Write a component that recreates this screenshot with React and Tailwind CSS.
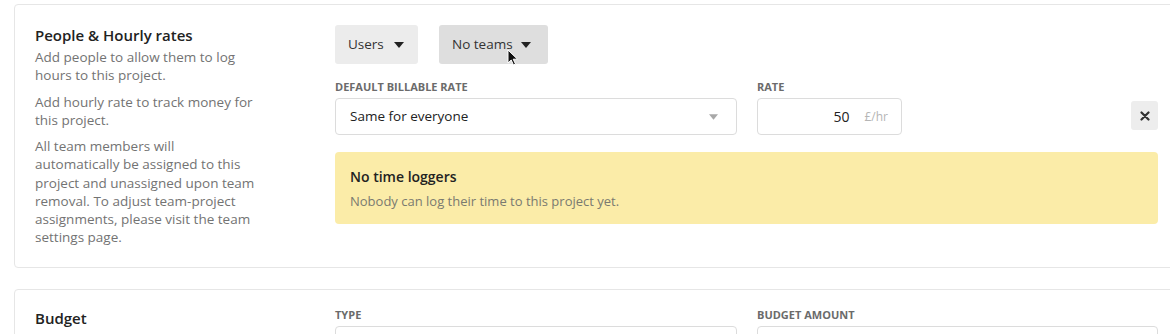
import React from 'react';

const Caret = ({ className = '' }) => (
  <svg className={className} width="10" height="6" viewBox="0 0 10 6">
    <path d="M0 0h10L5 6z" fill="currentColor" />
  </svg>
);

const Label = ({ children }) => (
  <div className="text-[11px] font-bold uppercase text-[#6b6b6b] leading-[14px] mb-[4px]">
    {children}
  </div>
);

const App = () => {
  return (
    <div className="w-[1170px] h-[334px] overflow-hidden bg-white text-[#222] font-['Open_Sans','Liberation_Sans',sans-serif]">
      <div className="pt-[4px] pl-[14px]">
        {/* People & Hourly rates */}
        <div className="w-[1165px] border border-[#e6e6e6] rounded-[4px] p-[20px] flex">
          <div className="w-[300px] shrink-0">
            <h2 className="text-[15px] font-semibold leading-[20px] text-[#222]">People &amp; Hourly rates</h2>
            <div className="w-[222px] text-[13.5px] leading-[18.25px] text-[#737373] mt-[3px] space-y-[8px]">
              <p>Add people to allow them to log hours to this project.</p>
              <p>Add hourly rate to track money for this project.</p>
              <p>
                All team members will automatically be assigned to this project and unassigned upon team
                removal. To adjust team-project assignments, please visit the team settings page.
              </p>
            </div>
          </div>

          <div className="flex-1">
            <div className="flex gap-[21px]">
              <button className="h-[39px] w-[83px] rounded-[3px] bg-[#ececec] flex items-center pl-[13px] text-[13.5px] text-[#333]">
                Users
                <Caret className="ml-[10px] text-[#222]" />
              </button>
              <button className="relative h-[39px] w-[109px] rounded-[3px] bg-[#dedede] flex items-center pl-[13px] text-[13.5px] text-[#333]">
                No teams
                <Caret className="ml-[8px] text-[#222]" />
                {/* mouse pointer */}
                <svg className="absolute left-[68px] top-[24px]" width="12" height="17" viewBox="0 0 12 17">
                  <path d="M1 1v13l3.2-3 2.3 5 2-1-2.3-4.8H10.5z" fill="#111" stroke="#fff" strokeWidth="1" />
                </svg>
              </button>
            </div>

            <div className="flex mt-[16px] items-start">
              <div className="w-[402px]">
                <Label>Default billable rate</Label>
                <div className="h-[37px] border border-[#dcdcdc] rounded-[4px] flex items-center justify-between pl-[14px] pr-[18px] text-[13.5px] font-medium text-[#222]">
                  Same for everyone
                  <Caret className="text-[#a8a8a8] w-[9px]" />
                </div>
              </div>
              <div className="w-[145px] ml-[20px]">
                <Label>Rate</Label>
                <div className="h-[37px] border border-[#dcdcdc] rounded-[4px] flex items-center justify-end pr-[13px] text-[14px]">
                  <span className="text-[#222] font-medium">50</span>
                  <span className="ml-[15px] text-[12px] text-[#b5b5b5]">£/hr</span>
                </div>
              </div>
              <div className="flex-1 flex justify-end pt-[21px]">
                <button className="w-[27px] h-[29px] rounded-[3px] bg-[#ededed] flex items-center justify-center">
                  <svg width="10" height="10" viewBox="0 0 10 10">
                    <path d="M1.5 1.5l7 7M8.5 1.5l-7 7" stroke="#333" strokeWidth="2.2" strokeLinecap="round" />
                  </svg>
                </button>
              </div>
            </div>

            <div className="mt-[17px] h-[72px] rounded-[4px] bg-[#fbeca8] pl-[15px] pt-[16px]">
              <div className="text-[14px] font-semibold leading-[18px] text-[#222]">No time loggers</div>
              <div className="text-[13px] leading-[18px] text-[#7a7a70] mt-[6px]">
                Nobody can log their time to this project yet.
              </div>
            </div>
          </div>
        </div>

        {/* Budget */}
        <div className="mt-[21px] w-[1165px] border border-[#e6e6e6] rounded-[4px] px-[20px] pt-[18px] pb-[20px] flex">
          <div className="w-[300px] shrink-0">
            <h2 className="text-[15px] font-semibold leading-[20px] text-[#222]">Budget</h2>
          </div>
          <div className="flex-1 flex">
            <div className="w-[402px]">
              <Label>Type</Label>
              <div className="h-[37px] border border-[#dcdcdc] rounded-[4px]" />
            </div>
            <div className="w-[401px] ml-[20px]">
              <Label>Budget amount</Label>
              <div className="h-[37px] border border-[#dcdcdc] rounded-[4px]" />
            </div>
          </div>
        </div>
      </div>
    </div>
  );
};

export default App;
